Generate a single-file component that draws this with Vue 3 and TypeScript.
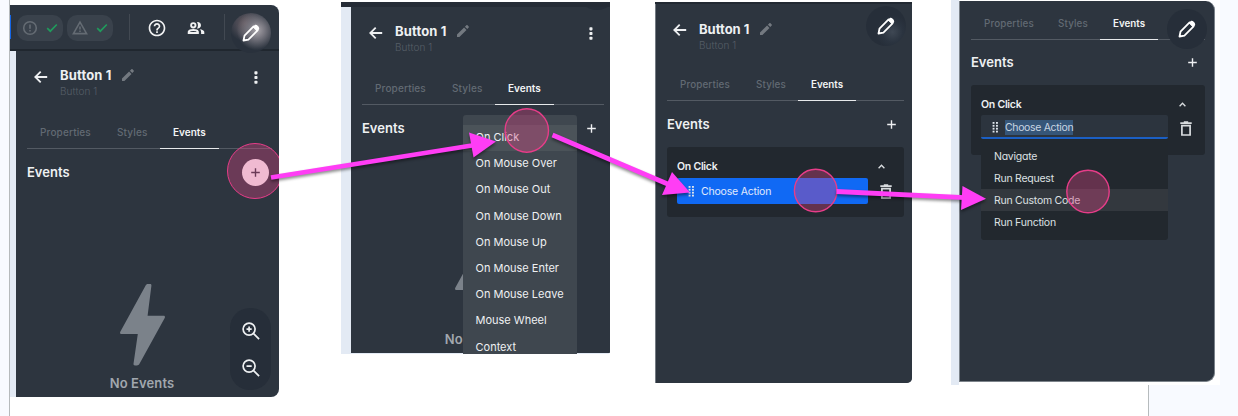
<script setup lang="ts">
interface Panel {
  id: string
  head: boolean
  empty: boolean
  card: boolean
}

const panels: Panel[] = [
  { id: 'one', head: true, empty: true, card: false },
  { id: 'two', head: true, empty: true, card: false },
  { id: 'three', head: true, empty: false, card: true },
  { id: 'four', head: false, empty: false, card: true },
]

const tabs = ['Properties', 'Styles', 'Events']

const triggers = [
  'On Click',
  'On Mouse Over',
  'On Mouse Out',
  'On Mouse Down',
  'On Mouse Up',
  'On Mouse Enter',
  'On Mouse Leave',
  'Mouse Wheel',
  'Context',
]

const actions = ['Navigate', 'Run Request', 'Run Custom Code', 'Run Function']
</script>

<template>
  <main class="canvas">
    <section v-for="p in panels" :key="p.id" class="shot" :class="p.id">
      <header v-if="p.id === 'one'" class="topbar">
        <i class="sliver"></i>
        <div class="pill">
          <svg width="16" height="16" viewBox="0 0 16 16" class="dim">
            <circle cx="8" cy="8" r="6.3" />
            <path d="M8 4.4v4.3M8 10v1.5" />
          </svg>
          <svg width="12" height="10" viewBox="0 0 12 10" class="tick"><path d="M1.2 5.2l3.1 3L10.8 1.5" /></svg>
        </div>
        <div class="pill">
          <svg width="16" height="16" viewBox="0 0 16 16" class="dim">
            <path d="M8 2.2L14.6 13.6H1.4z" />
            <path d="M8 6.4v3.2M8 10.6v1.3" />
          </svg>
          <svg width="12" height="10" viewBox="0 0 12 10" class="tick"><path d="M1.2 5.2l3.1 3L10.8 1.5" /></svg>
        </div>
        <i class="rule r1"></i>
        <svg class="help" width="20" height="20" viewBox="0 0 24 24">
          <path
            fill="#f1f2f3"
            d="M11 18h2v-2h-2v2zm1-16C6.480 2 2 6.480 2 12s4.480 10 10 10 10-4.480 10-10S17.520 2 12 2zm0 18c-4.410 0-8-3.590-8-8s3.590-8 8-8 8 3.590 8 8-3.590 8-8 8zm0-14c-2.210 0-4 1.790-4 4h2c0-1.100.9-2 2-2s2 .9 2 2c0 2-3 1.750-3 5h2c0-2.250 3-2.500 3-5 0-2.210-1.790-4-4-4z"
          />
        </svg>
        <svg class="users" width="18" height="14" viewBox="0 0 18 14">
          <g fill="none" stroke="#f1f2f3" stroke-width="1.900">
            <circle cx="6.300" cy="4.300" r="2.200" />
            <path d="M1.700 12v-1.200C2.200 9.600 4 9 6.300 9s4.100.6 4.600 1.800V12z" />
          </g>
          <path
            fill="#f1f2f3"
            d="M10 1.200a3.200 3.200 0 1 1 0 6.200c1.300-1.700 1.300-4.500 0-6.200zM12.700 8.300c2.500.3 4.600 1.200 4.600 2.700V13h-3.200v-2c0-1.100-.5-2-1.400-2.700z"
          />
        </svg>
        <i class="rule r2"></i>
      </header>

      <div class="body">
        <div v-if="p.head" class="head">
          <svg class="back" width="14" height="14" viewBox="0 0 14 14">
            <path d="M13.200 7H1.500M6.700 1.600L1.300 7l5.400 5.400" />
          </svg>
          <div class="names">
            <div class="name">
              <b>Button 1</b>
              <svg width="12" height="12" viewBox="0 0 12 12">
                <path d="M0 9.600L7.100 2.500 9.500 4.900 2.400 12H0zM7.900 1.700L9.400.3c.3-.3.8-.3 1.100 0l1.200 1.200c.3.3.3.8 0 1.100L10.300 4.100z" fill="#737980" />
              </svg>
            </div>
            <div class="sub">Button 1</div>
          </div>
          <svg v-if="p.id !== 'three'" class="kebab" width="4" height="13" viewBox="0 0 4 13">
            <rect x=".4" y=".3" width="3.100" height="3.100" rx=".8" />
            <rect x=".4" y="5" width="3.100" height="3.100" rx=".8" />
            <rect x=".4" y="9.700" width="3.100" height="3.100" rx=".8" />
          </svg>
        </div>

        <nav class="tabs">
          <span v-for="t in tabs" :key="t" :class="[t.toLowerCase(), { active: t === 'Events' }]">{{ t }}</span>
        </nav>

        <div class="row">
          <h2>Events</h2>
          <span class="add">
            <svg width="9" height="9" viewBox="0 0 9 9"><path d="M4.500 .2v8.600M.2 4.500h8.600" /></svg>
          </span>
        </div>

        <div v-if="p.empty" class="empty">
          <svg width="45" height="82" viewBox="0 0 45 82">
            <path
              d="M25.500 1.800C26 .6 26.800 0 28 0h2c1 0 1.500.6 1.400 1.700L27.600 31.800h15.900c1.300 0 1.800 1 1.200 2.200L19.500 79.800c-.6 1.100-1.400 1.700-2.600 1.700h-2c-1 0-1.500-.6-1.400-1.700L17.800 50H1.500C.2 50-.3 49 .3 47.800z"
              fill="#7b828a"
            />
          </svg>
          <p>No Events</p>
        </div>

        <div v-if="p.card" class="card">
          <div class="card-head">
            <span>On Click</span>
            <svg width="7" height="5" viewBox="0 0 7 5"><path d="M.6 4.300L3.500 1.200l2.900 3.100" /></svg>
          </div>
          <div class="line">
            <div class="field">
              <svg width="7" height="11" viewBox="0 0 7 11" fill="#dfe5ec">
                <template v-for="y in 4" :key="y">
                  <rect x=".6" :y="(y - 1) * 2.9" width="1.900" height="1.800" />
                  <rect x="4" :y="(y - 1) * 2.9" width="1.900" height="1.800" />
                </template>
              </svg>
              <span>Choose Action</span>
            </div>
            <svg class="trash" width="12" height="15" viewBox="0 0 12 15">
              <path d="M.3 2.200h11.400M3.800 1.200h4.400M1.900 4.700h8.200v9.300H1.900z" />
            </svg>
          </div>
        </div>
      </div>

      <ul v-if="p.id === 'two'" class="menu triggers">
        <li v-for="(t, i) in triggers" :key="t" :class="{ hover: i === 0 }">{{ t }}</li>
      </ul>
      <ul v-if="p.id === 'four'" class="menu actions">
        <li v-for="(a, i) in actions" :key="a" :class="{ hover: i === 2 }">{{ a }}</li>
      </ul>

      <div class="badge" :class="p.id">
        <svg v-if="p.id !== 'two'" width="18" height="18" viewBox="0 0 18 18">
          <path d="M1.500 16.500l1-4.800L11.600 2.400l4 4-9.200 9.200z" fill="none" stroke="#fff" stroke-width="1.800" stroke-linejoin="round" />
          <path d="M10.800 3l2-2c1.600-1.100 5.200 2.100 4.200 4.200l-2.100 2z" fill="#fff" />
        </svg>
      </div>

      <div v-if="p.id === 'one'" class="zoom">
        <svg v-for="z in ['in', 'out']" :key="z" width="18" height="18" viewBox="0 0 18 18">
          <circle cx="7.100" cy="7.100" r="6" />
          <path d="M11.600 11.600l5.500 5.500M4.500 7.100h5.200" />
          <path v-if="z === 'in'" d="M7.100 4.500v5.200" />
        </svg>
      </div>
      <i v-if="p.id === 'one'" class="press"></i>
    </section>

    <svg class="marks" width="1238" height="416" viewBox="0 0 1238 416">
      <g class="dots">
        <circle cx="526.800" cy="130.500" r="21.700" />
        <circle cx="815.700" cy="190.500" r="21.300" />
        <circle cx="1088" cy="191.500" r="21.200" />
      </g>
      <g class="arrows">
        <path d="M271 177.500L475 145" />
        <path d="M552.500 135L670 185" />
        <path d="M836.500 191.500L965 197.700" />
        <polygon points="469,132.500 496,141.500 473.500,157.500" />
        <polygon points="672,172 690,192.500 662,195" />
        <polygon points="962.500,186 986,198.700 961,210" />
      </g>
    </svg>
  </main>
</template>

<style>
body {
  margin: 0;
}
</style>

<style scoped>
.canvas {
  position: relative;
  box-sizing: border-box;
  width: 1238px;
  height: 416px;
  overflow: hidden;
  font-family: Inter, 'Noto Sans', sans-serif;
  font-feature-settings: 'cv11';
  color: #eef0f2;
  background: linear-gradient(90deg, #f8faff 9px, #b6babc 9px 10px, #fff 10px 1148px, #b6bbbd 1148px 1149px, #f8faff 1149px);
}
.shot {
  position: absolute;
  box-sizing: border-box;
  overflow: hidden;
  background: #e3eaf4;
}
.shot.one {
  left: 10px;
  top: 5px;
  width: 269px;
  height: 392px;
  border-radius: 0 8px 8px 0;
}
.shot.two {
  left: 341px;
  top: 2px;
  width: 269px;
  height: 352px;
  border-top: 5px solid #252c36;
  border-radius: 0 0 2px 0;
}
.shot.three {
  left: 655px;
  top: 2px;
  width: 257px;
  height: 381px;
  border-top: 2px solid #222932;
  border-radius: 0 0 5px 0;
  background: #737a82;
}
.shot.four {
  left: 951px;
  top: 0;
  width: 269px;
  height: 385px;
  background: linear-gradient(90deg, #e3eaf4 8px, #fff 8px);
}
.body {
  box-sizing: border-box;
  background: #2d353f;
  padding: 0 7px 0 11px;
  margin-left: 6px;
  height: 346px;
}
.two .body {
  margin-left: 10px;
  padding-right: 6px;
}
.three .body {
  margin-left: 1px;
  height: 379px;
  padding-right: 8px;
}
.four .body {
  margin: 1px 5px 0 8px;
  height: 381px;
  padding: 6px 9px 0 11px;
  border: 1px solid #7c838a;
  border-top-width: 0;
  border-radius: 0 9px 9px 0;
}

.topbar {
  box-sizing: border-box;
  display: flex;
  align-items: center;
  height: 46px;
  background: #2d353f;
  border-bottom: 2px solid #20272f;
}
.sliver {
  width: 1px;
  height: 24px;
  background: #1466e8;
  margin-right: 6px;
}
.pill {
  box-sizing: border-box;
  display: flex;
  align-items: center;
  justify-content: space-between;
  width: 46px;
  height: 26px;
  padding: 0 5px;
  margin: 2px 4px 0 0;
  border-radius: 10px;
  background: #3a424c;
}
.dim {
  fill: none;
  stroke: #646b73;
  stroke-width: 1.6;
}
.tick {
  fill: none;
  stroke: #209a5c;
  stroke-width: 1.7;
}
.rule {
  width: 1px;
  height: 26px;
  background: #424952;
}
.r1 {
  margin-left: 12px;
}
.help {
  margin: 2px 0 0 17px;
}
.users {
  margin: 2px 0 0 20px;
}
.r2 {
  margin-left: 19px;
}

.head {
  display: flex;
  align-items: flex-start;
  height: 65px;
}
.three .head {
  height: 64px;
}
.back {
  margin: 19px 12px 0 7px;
  fill: none;
  stroke: #eef0f2;
  stroke-width: 1.8;
}
.three .back {
  margin-left: 6px;
}
.names {
  padding-top: 15px;
}
.three .names {
  padding-top: 16px;
}
.name {
  display: flex;
  align-items: center;
  gap: 8px;
  height: 17px;
}
.name b {
  width: 54px;
  font-size: 13px;
  font-weight: 700;
  letter-spacing: 0.15px;
  white-space: nowrap;
}
.three .name b {
  width: 53px;
  letter-spacing: 0;
}
.sub {
  font-size: 10px;
  line-height: 17px;
  font-weight: 300;
  letter-spacing: 0.1px;
  color: #565e67;
}
.three .sub {
  line-height: 16px;
}
.kebab {
  margin: 20px 14px 0 auto;
  fill: #eef0f2;
}
.two .kebab {
  margin-right: 11px;
}

.tabs {
  box-sizing: border-box;
  display: flex;
  height: 33px;
  border-bottom: 1px solid #535a63;
  font-size: 10px;
  font-weight: 500;
  line-height: 33px;
  color: #626a73;
}
.three .tabs,
.four .tabs {
  line-height: 34px;
}
.tabs span {
  box-sizing: border-box;
  height: 33px;
  padding-left: 13px;
  letter-spacing: 0.15px;
}
.properties {
  width: 77px;
}
.styles {
  width: 56px;
}
.tabs .active {
  width: 59px;
  padding-left: 13px;
  font-weight: 600;
  color: #f3f4f5;
  border-bottom: 1.5px solid #e7e9eb;
  letter-spacing: 0;
}
.three .tabs span,
.four .tabs span {
  font-size: 9.8px;
}
.three .properties {
  width: 76px;
}
.three .styles {
  width: 55px;
}
.three .tabs .active,
.four .tabs .active {
  width: 58px;
}
.four .properties {
  width: 74px;
}
.four .styles {
  width: 55px;
}

.row {
  display: flex;
  align-items: center;
  justify-content: space-between;
  height: 47px;
}
.three .row {
  height: 46px;
}
.four .row {
  height: 45px;
}
.row h2 {
  margin: 0 0 1px;
  font-size: 13px;
  font-weight: 600;
  line-height: 18px;
}
.add {
  display: flex;
  align-items: center;
  justify-content: center;
  width: 27px;
  height: 27px;
  border-radius: 50%;
}
.two .add,
.three .add,
.four .add {
  margin-right: -1px;
}
.add svg {
  fill: none;
  stroke: #eef0f2;
  stroke-width: 1.4;
}
.one .add {
  margin-right: 3px;
  background: #fff;
}
.one .add svg {
  stroke: #2d353f;
}

.empty {
  display: flex;
  flex-direction: column;
  align-items: center;
  width: 230px;
  padding-top: 88px;
}
.empty p {
  margin: 9px 0 0;
  font-size: 13px;
  font-weight: 600;
  line-height: 17px;
  letter-spacing: 0.1px;
  color: #a1a7ae;
}

.card {
  box-sizing: border-box;
  height: 70px;
  padding: 8px 10px 0;
  border-radius: 3px;
  background: #22282f;
}
.card-head {
  display: flex;
  align-items: center;
  justify-content: space-between;
  height: 23px;
  padding-right: 9px;
  font-size: 10.5px;
  font-weight: 600;
  letter-spacing: -0.25px;
}
.card-head svg,
.trash {
  fill: none;
  stroke: #d9dcdf;
  stroke-width: 1.3;
}
.line {
  display: flex;
  align-items: center;
  gap: 12px;
}
.field {
  box-sizing: border-box;
  display: flex;
  align-items: center;
  gap: 6px;
  width: 191px;
  height: 26px;
  padding-left: 11px;
  border-radius: 2px;
  background: #1069f4;
  font-size: 10.5px;
  color: #e1eafc;
}
.field span {
  letter-spacing: -0.2px;
  line-height: 15px;
  white-space: nowrap;
}
.four .card-head {
  height: 22px;
}
.four .field {
  width: 187px;
  height: 24px;
  padding-top: 3px;
  background: #2c343e;
  border-bottom: 2px solid #1b5fc4;
  color: #c9d5e2;
}
.four .field span {
  letter-spacing: -0.35px;
  background: #365679;
}
.four .trash {
  margin-top: 3px;
}
.trash {
  stroke-width: 1.7;
}

.menu {
  position: absolute;
  margin: 0;
  list-style: none;
  white-space: nowrap;
}
.triggers {
  left: 121.5px;
  top: 108px;
  width: 114.5px;
  padding: 10px 0;
  border-radius: 3px;
  background: #3f474f;
  font-size: 11px;
}
.triggers li {
  height: 26.2px;
  line-height: 25.4px;
  padding-left: 13px;
  letter-spacing: 0;
}
.triggers .hover {
  background: #4b5359;
}
.actions {
  left: 30px;
  top: 139px;
  width: 187px;
  height: 101px;
  padding: 6px 0 0;
  box-sizing: border-box;
  border-radius: 0 0 3px 3px;
  background: #22282e;
  font-size: 10.5px;
}
.actions li {
  height: 22.1px;
  line-height: 23.4px;
  padding-left: 13px;
  letter-spacing: -0.25px;
  color: #dde0e3;
}
.actions .hover {
  background: #33383e;
}

.badge {
  position: absolute;
  display: flex;
  align-items: center;
  justify-content: center;
  width: 40px;
  height: 40px;
  border-radius: 50%;
  background: #262e39;
}
.badge.one {
  left: 221px;
  top: 8px;
  background: radial-gradient(circle at 64% 43%, #aaa6ac 0, #77767f 24%, transparent 58%),
    radial-gradient(circle at 37% 27%, #68595e 0, #484852 25%, transparent 46%), #29313c;
}
.badge.two {
  left: 236px;
  top: -37px;
}
.badge.three {
  left: 211px;
  top: 2px;
  background: radial-gradient(circle at 66% 65%, #3f4854 0, #2b3440 27%, #262e39 45%);
}
.badge.four {
  left: 216px;
  top: 9px;
}
.zoom {
  position: absolute;
  left: 220px;
  top: 303px;
  box-sizing: border-box;
  display: flex;
  flex-direction: column;
  align-items: center;
  gap: 19px;
  width: 41px;
  height: 82px;
  padding-top: 14px;
  border-radius: 20px;
  background: #262e39;
}
.zoom svg {
  fill: none;
  stroke: #eef0f2;
  stroke-width: 1.7;
}
.press {
  position: absolute;
  box-sizing: border-box;
  left: 217px;
  top: 138px;
  width: 56px;
  height: 56px;
  border: 1.5px solid #e73d89;
  border-radius: 50%;
  background: rgba(213, 67, 130, 0.37);
}
.marks {
  position: absolute;
  left: 0;
  top: 0;
}
.dots {
  fill: rgba(213, 67, 130, 0.37);
  stroke: #e73d89;
  stroke-width: 1.4;
}
.arrows {
  fill: #ff3df5;
  filter: drop-shadow(0 2px 1.5px rgba(0, 0, 0, 0.45));
}
.arrows path {
  stroke: #ff3df5;
  stroke-width: 4.8;
}
</style>
